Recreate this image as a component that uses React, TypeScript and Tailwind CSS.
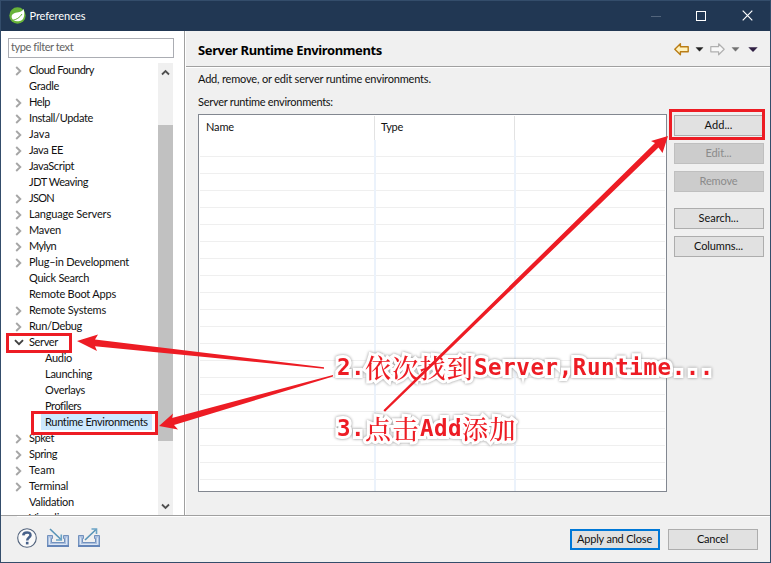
import { useLayoutEffect, useRef, useState } from 'react';

type FitProps = { text: string; width: number; className?: string };

// Sets a label to a fixed width by spreading the difference over its letters.
function Fit({ text, width, className = '' }: FitProps) {
  const ref = useRef<HTMLSpanElement>(null);
  const [spacing, setSpacing] = useState(0);
  useLayoutEffect(() => {
    const el = ref.current;
    if (!el) return;
    el.style.letterSpacing = '0px';
    const natural = el.getBoundingClientRect().width;
    const next = (width - natural) / text.length;
    el.style.letterSpacing = `${next}px`;
    setSpacing(next);
  }, [text, width]);
  return (
    <span ref={ref} className={`inline-block whitespace-pre ${className}`} style={{ letterSpacing: `${spacing}px` }}>
      {text}
    </span>
  );
}

type Node = { label: string; width: number; state?: 'closed' | 'open'; child?: boolean; selected?: boolean };

const nodes: Node[] = [
  { label: 'Cloud Foundry', width: 65, state: 'closed' },
  { label: 'Gradle', width: 30 },
  { label: 'Help', width: 21, state: 'closed' },
  { label: 'Install/Update', width: 64, state: 'closed' },
  { label: 'Java', width: 21, state: 'closed' },
  { label: 'Java EE', width: 34, state: 'closed' },
  { label: 'JavaScript', width: 45, state: 'closed' },
  { label: 'JDT Weaving', width: 59 },
  { label: 'JSON', width: 25, state: 'closed' },
  { label: 'Language Servers', width: 82, state: 'closed' },
  { label: 'Maven', width: 32, state: 'closed' },
  { label: 'Mylyn', width: 27, state: 'closed' },
  { label: 'Plug–in Development', width: 100, state: 'closed' },
  { label: 'Quick Search', width: 60 },
  { label: 'Remote Boot Apps', width: 87 },
  { label: 'Remote Systems', width: 77, state: 'closed' },
  { label: 'Run/Debug', width: 53, state: 'closed' },
  { label: 'Server', width: 29, state: 'open' },
  { label: 'Audio', width: 27, child: true },
  { label: 'Launching', width: 47, child: true },
  { label: 'Overlays', width: 40, child: true },
  { label: 'Profilers', width: 36, child: true },
  { label: 'Runtime Environments', width: 103, child: true, selected: true },
  { label: 'Spket', width: 25, state: 'closed' },
  { label: 'Spring', width: 28, state: 'closed' },
  { label: 'Team', width: 26, state: 'closed' },
  { label: 'Terminal', width: 39, state: 'closed' },
  { label: 'Validation', width: 45 },
  { label: 'Visualiser', width: 44 },
];

function TreeRow({ node }: { node: Node }) {
  return (
    <div className={`flex h-4 shrink-0 items-center ${node.child ? 'pl-10' : 'pl-3'}`}>
      {!node.child && (
        <span className="flex w-3 shrink-0 items-center justify-center">
          {node.state === 'closed' && (
            <svg width="7" height="10" viewBox="0 0 7 10" className="mr-px mt-px">
              <path d="M1.2 1L5.3 5L1.2 9" fill="none" stroke="#a6a6a6" strokeWidth="1.9" />
            </svg>
          )}
          {node.state === 'open' && (
            <svg width="10" height="7" viewBox="0 0 10 7" className="mr-px mt-px">
              <path d="M1 1.2L5 5.2L9 1.2" fill="none" stroke="#404040" strokeWidth="1.9" />
            </svg>
          )}
        </span>
      )}
      <span className={`flex h-4 items-center pl-1 ${node.selected ? 'w-[111px] bg-[#cce8ff]' : ''}`}>
        <Fit text={node.label} width={node.width} />
      </span>
    </div>
  );
}

function Button({ text, width, kind = 'normal' }: { text: string; width: number; kind?: 'normal' | 'disabled' | 'primary' }) {
  const look =
    kind === 'disabled'
      ? 'border border-[#bfbfbf] bg-[#cccccc] text-[#8b8b8b]'
      : kind === 'primary'
        ? 'border-2 border-[#0078d7] bg-[#e1e1e1]'
        : 'border border-[#adadad] bg-[#e1e1e1]';
  return (
    <button className={`flex h-[21px] w-[90px] shrink-0 items-center justify-center pb-px pr-px ${look}`}>
      <Fit text={text} width={width} />
    </button>
  );
}

function Caret({ color }: { color: string }) {
  return (
    <svg width="9" height="5" viewBox="0 0 9 5">
      <path d="M1 .5H8L4.5 4.3Z" fill={color} stroke={color} strokeWidth="0.4" />
    </svg>
  );
}

function TrayIcon({ out = false }: { out?: boolean }) {
  return (
    <svg width="22" height="20" viewBox="0 0 22 20">
      <path d="M.5 7.5H5.5V10.5H4.5V14.5H17.5V10.5H16.5V7.5H21.5V18.5H.5Z" fill="#a9bfdf" stroke="#7291bd" />
      <path d="M2.5 9.5V16.5H19.5V9.5" fill="none" stroke="#dbe5f3" />
      <path d="M0 18H22" stroke="#6485b8" strokeWidth="2" />
      {out ? (
        <>
          <path d="M7 12L18 1.5" stroke="#5793b7" strokeWidth="1.6" />
          <path d="M13.5 1H18.5V6" fill="none" stroke="#69a3c5" strokeWidth="1.6" />
        </>
      ) : (
        <>
          <path d="M3 1L14 11.5" stroke="#5793b7" strokeWidth="1.6" />
          <path d="M14.3 6.5V12H9" fill="none" stroke="#69a3c5" strokeWidth="1.6" />
        </>
      )}
    </svg>
  );
}

function Table() {
  return (
    <div className="h-[378px] w-[469px] shrink-0 border border-[#828790] bg-white px-px pt-px">
      <div className="flex h-6 items-center">
        <div className="flex h-6 w-[175px] items-center border-r border-[#e2e2e2] pb-0.5 pl-1.5">
          <Fit text="Name" width={28} />
        </div>
        <div className="flex h-6 w-[140px] items-center border-r border-[#e2e2e2] pb-0.5 pl-1.5">
          <Fit text="Type" width={22} />
        </div>
      </div>
      <div className="relative h-[351px]">
        <div className="grid h-full grid-rows-[17px_repeat(19,17px)_1fr]">
          {Array.from({ length: 21 }, (_, row) => (
            <div key={row} className={row < 20 ? 'border-b border-b-[#efefef]' : ''} />
          ))}
        </div>
        <div className="absolute inset-y-0 left-[174px] w-[142px] border-x-2 border-[#ebf2fb]" />
      </div>
    </div>
  );
}

function Note({ parts }: { parts: { t: string; w: number; cjk?: boolean }[] }) {
  return (
    <div className="flex items-center whitespace-pre leading-[32px] text-[#ed1c24] [paint-order:stroke_fill] [-webkit-text-stroke:6px_white] [filter:drop-shadow(0_0_1.5px_#909090)]">
      {parts.map((p) =>
        p.cjk ? (
          <Fit
            key={p.t}
            text={p.t}
            width={p.w}
            className="font-['Noto_Serif_CJK_SC','Noto_Sans_CJK_SC',sans-serif] text-[26px] font-medium"
          />
        ) : (
          <Fit key={p.t} text={p.t} width={p.w} className="pt-px font-['DejaVu_Sans_Mono',monospace] text-[22.5px] font-bold" />
        ),
      )}
    </div>
  );
}

export default function App() {
  return (
    <div className="relative flex h-[563px] w-[771px] flex-col overflow-hidden border border-[#344d6b] bg-[#f0f0f0] font-[Lato,'Noto_Sans_CJK_SC',sans-serif] text-[11px] leading-4 text-[#111]">
      <header className="flex h-[30px] shrink-0 items-center bg-[#213753] pl-2 text-white">
        <svg width="17" height="17" viewBox="0 0 17 17" className="-mt-px">
          <circle cx="8.5" cy="8.5" r="8.2" fill="#68b339" />
          <path d="M14.6 2C16.2 8 15.2 13.6 9.8 14.2C7 14.7 3.4 14 2.7 10.6C2 5.6 7.6 5.6 10.5 4.9C12.7 4.4 13.8 3.4 14.6 2Z" fill="white" />
          <path d="M3.2 13.4C7.3 12.7 10.8 10.7 13 7" fill="none" stroke="#68b339" strokeWidth="1" />
        </svg>
        <Fit text="Preferences" width={56} className="-mt-px ml-[3.5px]" />
        <div className="ml-auto flex items-center pr-[17px]">
          <span className="mr-[35px] h-px w-[10px] bg-[#53657c]" />
          <span className="mr-[36px] size-[10px] border border-white" />
          <svg width="11" height="11" viewBox="0 0 11 11" className="-mt-px">
            <path d="M.7.7L10.3 10.3M10.3.7L.7 10.3" stroke="white" strokeWidth="1.2" />
          </svg>
        </div>
      </header>

      <div className="flex h-[484px] shrink-0">
        <aside className="flex w-[184px] shrink-0 flex-col border-r border-[#a0a0a0] bg-white">
          <div className="ml-[7px] mt-[7px] flex h-5 w-[166px] shrink-0 items-center border border-[#abadb3] pb-0.5 pl-0.5 text-[#636363]">
            <Fit text="type filter text" width={62} />
          </div>
          <div className="mt-1 flex min-h-0 flex-1">
            <div className="flex w-[157px] flex-col overflow-hidden">
              {nodes.map((n) => (
                <TreeRow key={n.label} node={n} />
              ))}
            </div>
            <div className="mt-px flex w-[15px] flex-col bg-[#f0f0f0]">
              <div className="flex h-[62px] justify-center pt-1.5">
                <svg width="9" height="7" viewBox="0 0 9 7">
                  <path d="M1 5.5L4.5 2L8 5.5" fill="none" stroke="#505050" strokeWidth="1.8" />
                </svg>
              </div>
              <div className="h-[316px] bg-[#c1c1c1]" />
              <div className="mt-auto flex justify-center pb-[5px]">
                <svg width="9" height="7" viewBox="0 0 9 7">
                  <path d="M1 1.5L4.5 5L8 1.5" fill="none" stroke="#505050" strokeWidth="1.8" />
                </svg>
              </div>
            </div>
          </div>
        </aside>

        <main className="flex min-w-0 flex-1 flex-col border-l border-white">
          <div className="flex h-9 shrink-0 items-center border-b border-[#a0a0a0] pl-3 pt-0.5">
            <Fit text="Server Runtime Environments" width={184} className="font-['Noto_Sans',sans-serif] text-[13px] font-bold text-black" />
            <div className="ml-auto flex items-center pr-3">
              <svg width="15" height="13" viewBox="0 0 15 13">
                <path d="M.8 6.3L6.4.8V3.7H14.2V8.8H6.4V11.8Z" fill="#fff2bd" stroke="#ba7d16" strokeWidth="1.4" strokeLinejoin="round" />
              </svg>
              <span className="ml-1.5 flex"><Caret color="#202020" /></span>
              <svg width="15" height="13" viewBox="0 0 15 13" className="ml-1.5">
                <path d="M14.2 6.3L8.6.8V3.7H.8V8.8H8.6V11.8Z" fill="#f8f8f8" stroke="#b0b0b0" strokeWidth="1.2" strokeLinejoin="round" />
              </svg>
              <span className="ml-1.5 flex"><Caret color="#707070" /></span>
              <svg width="10" height="5" viewBox="0 0 10 5" className="ml-2">
                <path d="M.3 .2H9.7L5 4.9Z" fill="#302044" />
              </svg>
            </div>
          </div>
          <div className="flex flex-col border-t border-white pl-3 pt-[3px]">
            <Fit text="Add, remove, or edit server runtime environments." width={233} className="self-start" />
            <Fit text="Server runtime environments:" width={135} className="mt-[7px] self-start" />
            <div className="mt-1 flex">
              <Table />
              <div className="ml-[7px] flex flex-col gap-[7px] pt-px">
                <Button text="Add..." width={28} />
                <Button text="Edit..." width={26} kind="disabled" />
                <Button text="Remove" width={38} kind="disabled" />
                <div className="mt-[9px] flex flex-col gap-[7px]">
                  <Button text="Search..." width={40} />
                  <Button text="Columns..." width={49} />
                </div>
              </div>
            </div>
          </div>
        </main>
      </div>

      <footer className="flex flex-1 items-start border-t border-[#a0a0a0] pl-4">
        <div className="flex h-full w-full items-start border-t border-white pt-3">
          <svg width="20" height="20" viewBox="0 0 20 20" className="-mt-px">
            <circle cx="10" cy="10" r="9.3" fill="#fafafa" stroke="#52637d" strokeWidth="1.1" />
            <path d="M6.3 7.4C6.5 3.4 13.7 3.4 13.5 7.3C13.3 9.6 10.2 9.6 10.2 12.5" fill="none" stroke="#47618a" strokeWidth="2.5" />
            <path d="M8.9 13.8H11.5V16.4H8.9Z" fill="#47618a" />
          </svg>
          <span className="-mt-px ml-[10px] flex"><TrayIcon /></span>
          <span className="-mt-px ml-[9px] flex"><TrayIcon out /></span>
          <div className="ml-auto flex gap-2 pr-3">
            <Button text="Apply and Close" width={75} kind="primary" />
            <Button text="Cancel" width={31} />
          </div>
        </div>
      </footer>

      {/* Walk-through notes laid over the dialog */}
      <div className="absolute left-[336px] top-[349px]">
        <Note parts={[{ t: '2.', w: 28 }, { t: '依次找到', w: 109, cjk: true }, { t: 'Server,Runtime...', w: 240 }]} />
      </div>
      <div className="absolute left-[336px] top-[410px]">
        <Note parts={[{ t: '3.', w: 28 }, { t: '点击', w: 55, cjk: true }, { t: 'Add', w: 42 }, { t: '添加', w: 55, cjk: true }]} />
      </div>
      <svg className="absolute -left-px -top-px" width="771" height="563" viewBox="0 0 771 563">
        <g fill="none" stroke="#ed1c24" strokeWidth="3">
          <rect x="7.5" y="334.5" width="63" height="17" />
          <rect x="32.5" y="412.5" width="124" height="21" />
          <rect x="670.5" y="110.5" width="93" height="28" />
        </g>
        <g fill="#ed1c24">
          <path d="M77 341L98 334.5L95 339.5L324 367.2L324 368.7L95 346.3L97 351Z" />
          <path d="M159 426L173 413.5L172 418L333 375L333 376.5L174 425L178 429.5Z" />
          <path d="M668 136L662.5 153L658.5 147.5L385 411.8L383.4 410.2L655 143L651 141Z" />
        </g>
      </svg>
    </div>
  );
}
